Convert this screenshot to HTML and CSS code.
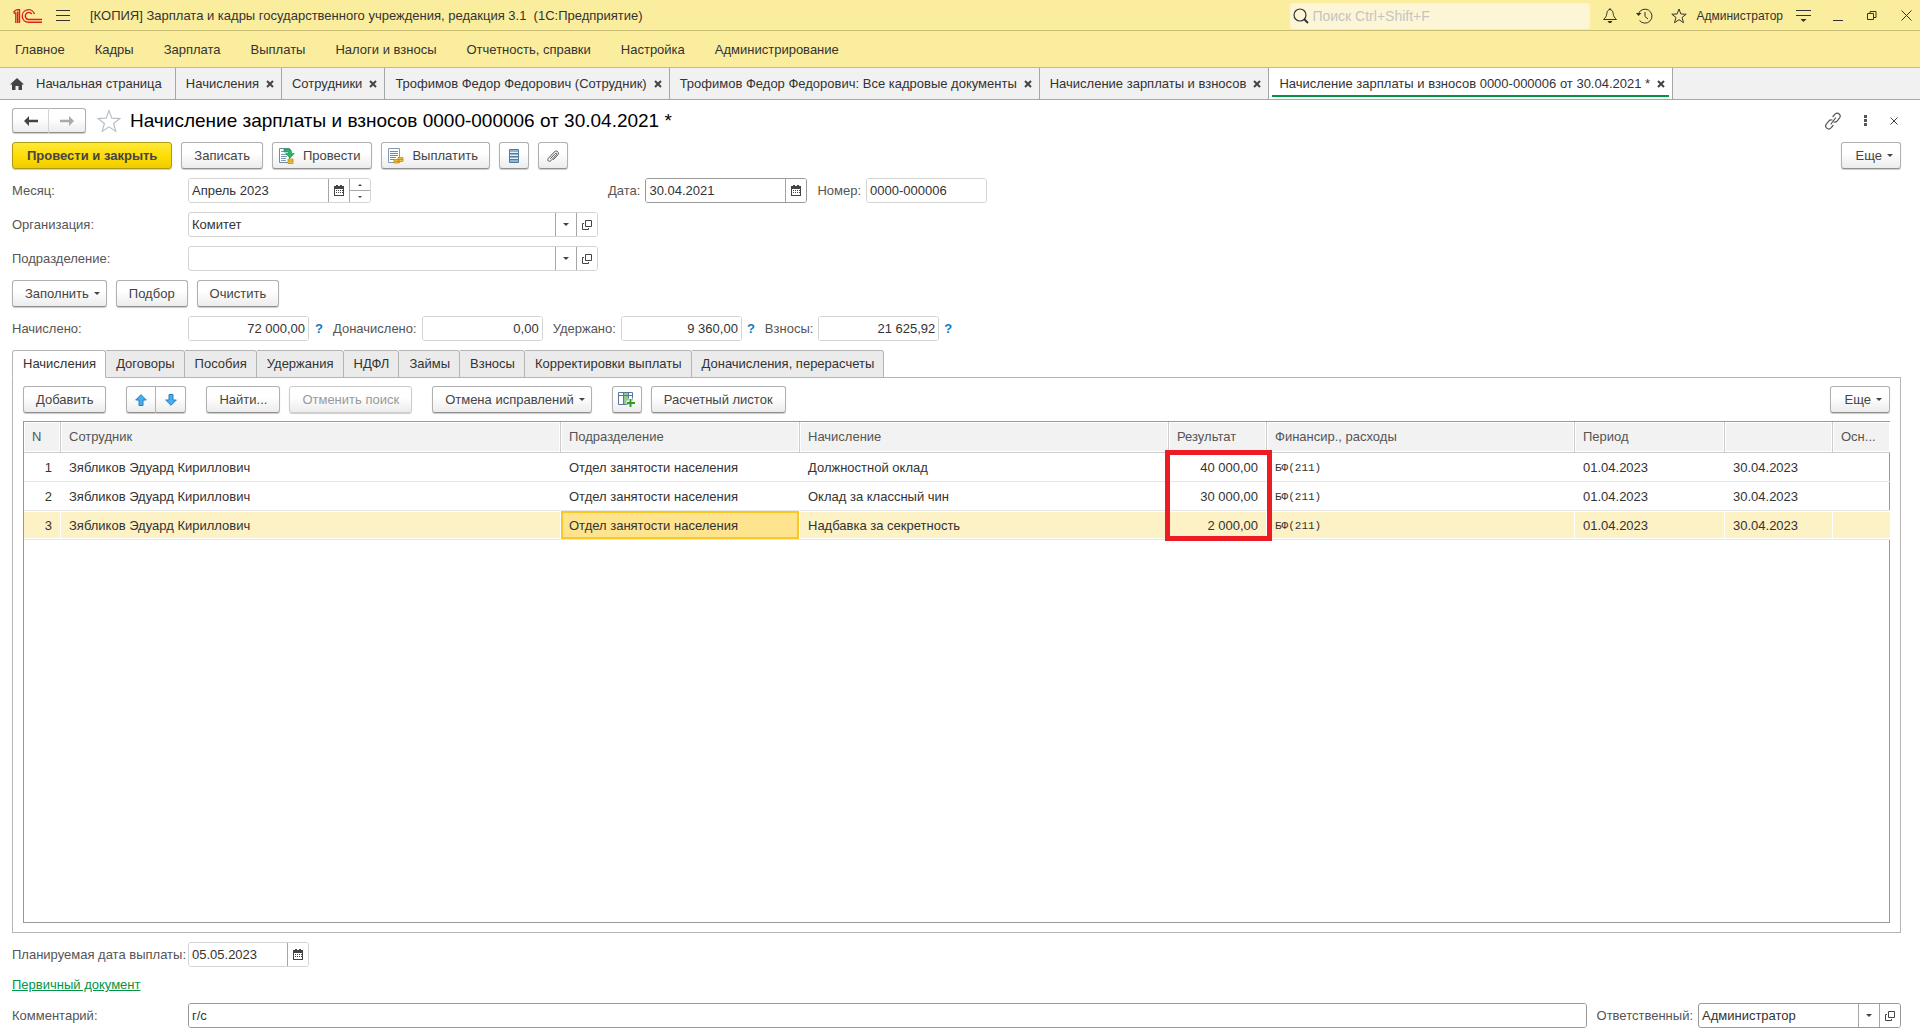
FILE: index.html
```html
<!DOCTYPE html>
<html lang="ru">
	<head>
		<meta charset="utf-8" />
		<meta name="viewport" content="width=device-width, initial-scale=1" />
		<title>Начисление зарплаты и взносов</title>
		<link rel="stylesheet" href="styles.css">
	</head>
	<body>
		<!-- shared icons -->
		<svg class="sprite" width="0" height="0">
			<symbol id="icoCalendar" viewBox="0 0 10 11">
				<path fill="#444" fill-rule="evenodd" d="M0 1h2V0h2v1h2V0h2v1h2v10H0zM1 4v6h8V4z" />
				<path stroke="#444" stroke-dasharray="1 1" d="M2 5.500h7M2 7.500h7" />
			</symbol>
			<symbol id="icoOpen" viewBox="0 0 10 10">
				<path fill="none" stroke="#444" d="M3.500.5h6v6h-6zM2 3.500H.5v6h6V8" />
			</symbol>
			<symbol id="icoClose" viewBox="0 0 8 8">
				<path stroke="#444" stroke-width="2" d="M1 1l6 6M7 1l-6 6" />
			</symbol>
			<symbol id="icoStar" viewBox="0 0 22 22">
				<path fill="none" stroke="currentColor" d="M11 1.500l2.600 6.900 7.400.3-5.800 4.600 2 7.200-6.200-4.100-6.200 4.100 2-7.200L1 8.700l7.400-.3z" />
			</symbol>
		</svg>

		<header class="titlebar">
			<svg class="logo" width="30" height="16" viewBox="0 0 30 16">
				<g fill="none" stroke="#d9231d" stroke-width="1.400">
					<path d="M.5 4L3.500 1.700M.5 5h2.300v10M3.500 1.700h3V15M4.700 3.500V15" />
					<path d="M21.500 6A6.300 6.300 0 1 0 15.500 14.300H29" />
					<path d="M18.800 6.200A3.500 3.500 0 1 0 15.500 11.500H29" />
				</g>
			</svg>
			<button class="icon-btn" aria-label="Меню">
				<svg width="14" height="13" viewBox="0 0 14 13"><path stroke="#333" d="M0 1.500h14M0 6.500h14M0 11.500h14" /></svg>
			</button>
			<h1 class="app-name">[КОПИЯ] Зарплата и кадры государственного учреждения, редакция 3.1&nbsp; (1С:Предприятие)</h1>
			<label class="search">
				<svg width="16" height="16" viewBox="0 0 16 16"><circle cx="7" cy="7" r="6" fill="none" stroke="#333" stroke-width="1.200" /><path stroke="#333" stroke-width="2" d="M11 11l4 4" /></svg>
				<input type="search" placeholder="Поиск Ctrl+Shift+F" aria-label="Поиск" />
			</label>
			<div class="sys">
				<button class="icon-btn" aria-label="Уведомления">
					<svg width="16" height="17" viewBox="0 0 16 17"><path fill="none" stroke="#333" d="M1.500 12.500h13c-2-2-3-3-3.300-6C11 4 9.500 2.500 8 2.500S5 4 4.800 6.500c-.3 3-1.300 4-3.300 6zM8 2.500V1" /><path fill="#333" d="M5.500 14h5L9 16H7z" /></svg>
				</button>
				<button class="icon-btn" aria-label="История">
					<svg width="17" height="16" viewBox="0 0 17 16"><path fill="none" stroke="#333" d="M2.500 5.500A7 7 0 1 1 3.500 12.500M9 4v4.500l3 2.500" /><path fill="#333" d="M0 5h5.500L2.500 8z" /></svg>
				</button>
				<button class="icon-btn" aria-label="Избранное">
					<svg width="16" height="16" viewBox="0 0 16 16"><path fill="none" stroke="#333" d="M8 1l1.900 5 5.300.2-4.200 3.300 1.500 5.200L8 11.700l-4.500 3L5 9.500.8 6.200 6.100 6z" /></svg>
				</button>
				<span class="user">Администратор</span>
				<button class="icon-btn" aria-label="Настройки">
					<svg width="15" height="15" viewBox="0 0 15 15"><path stroke="#333" d="M0 2.500h15M0 7.500h15" /><path fill="#333" d="M4.500 11h6l-3 3z" /></svg>
				</button>
			</div>
			<div class="win">
				<button class="icon-btn" aria-label="Свернуть"><svg width="10" height="10" viewBox="0 0 10 10"><path stroke="#333" d="M0 9.500h10" /></svg></button>
				<button class="icon-btn" aria-label="Развернуть"><svg width="10" height="10" viewBox="0 0 10 10"><path fill="none" stroke="#333" d="M.5 2.500h6v6h-6zM3 2V.5h6v6H7" /></svg></button>
				<button class="icon-btn" aria-label="Закрыть"><svg width="11" height="11" viewBox="0 0 11 11"><path stroke="#333" d="M.5.5l10 10M10.500.5l-10 10" /></svg></button>
			</div>
		</header>

		<nav class="menu">
			<a href="#">Главное</a>
			<a href="#">Кадры</a>
			<a href="#">Зарплата</a>
			<a href="#">Выплаты</a>
			<a href="#">Налоги и взносы</a>
			<a href="#">Отчетность, справки</a>
			<a href="#">Настройка</a>
			<a href="#">Администрирование</a>
		</nav>

		<nav class="windows">
			<a class="home" href="#">
				<svg width="14" height="12" viewBox="0 0 14 12"><path fill="#444" d="M7 0l7 6.500h-2V12H8.500V8h-3v4H2V6.500H0z" /></svg>
				Начальная страница
			</a>
			<a href="#">Начисления <svg width="8" height="8"><use href="#icoClose" /></svg></a>
			<a href="#">Сотрудники <svg width="8" height="8"><use href="#icoClose" /></svg></a>
			<a href="#">Трофимов Федор Федорович (Сотрудник) <svg width="8" height="8"><use href="#icoClose" /></svg></a>
			<a href="#">Трофимов Федор Федорович: Все кадровые документы <svg width="8" height="8"><use href="#icoClose" /></svg></a>
			<a href="#">Начисление зарплаты и взносов <svg width="8" height="8"><use href="#icoClose" /></svg></a>
			<a class="current" href="#">Начисление зарплаты и взносов 0000-000006 от 30.04.2021 * <svg width="8" height="8"><use href="#icoClose" /></svg></a>
		</nav>

		<main class="doc">
			<div class="row doc-head">
				<div class="pair nav-pair">
					<button class="btn" aria-label="Назад"><svg width="14" height="10" viewBox="0 0 14 10"><path fill="#444" d="M0 5l5-5v3.700h9v2.600H5V10z" /></svg></button>
					<button class="btn" aria-label="Вперед"><svg width="14" height="10" viewBox="0 0 14 10"><path fill="#aaa" d="M14 5L9 0v3.700H0v2.600h9V10z" /></svg></button>
				</div>
				<button class="icon-btn fav" aria-label="В избранное"><svg width="24" height="24"><use href="#icoStar" /></svg></button>
				<h2>Начисление зарплаты и взносов 0000-000006 от 30.04.2021 *</h2>
				<div class="doc-tools">
					<button class="icon-btn" aria-label="Получить ссылку">
						<svg width="16" height="18" viewBox="0 0 16 18"><path fill="none" stroke="#555" stroke-width="1.200" stroke-linecap="round" d="M6 12l4.500-6M8 4.500l2.200-2.600a3 3 0 0 1 4.400 4L12 9.200c-.8 1-2 1.200-3 .8M8 13.500l-2 2.400a3 3 0 0 1-4.500-4L4 8.800c.8-1 2-1.200 3-.8" /></svg>
					</button>
					<button class="icon-btn" aria-label="Еще действия"><svg width="3" height="11" viewBox="0 0 3 11"><path fill="#555" d="M0 0h3v3H0zM0 4h3v3H0zM0 8h3v3H0z" /></svg></button>
					<button class="icon-btn" aria-label="Закрыть документ"><svg width="8" height="8" viewBox="0 0 8 8"><path stroke="#444" d="M.5.5l7 7M7.500.5l-7 7" /></svg></button>
				</div>
			</div>

			<div class="row toolbar">
				<button class="btn primary">Провести и закрыть</button>
				<button class="btn">Записать</button>
				<button class="btn with-icon">
					<svg width="16" height="16" viewBox="0 0 16 16"><path fill="#fff" stroke="#6f8ba3" d="M.5.5h10v14H.5z" /><path stroke="#7d9bb5" d="M2 3.500h3M2 6.500h6M2 8.500h6M2 10.500h5M2 12.500h5" /><path fill="#24b864" stroke="#128a45" stroke-width=".6" d="M5 1h4.500q3 0 3 3v1.500h2.800L11 10 6.700 5.500h2.800V4H5z" /><path fill="#f5c542" stroke="#c08a14" stroke-width=".8" d="M9 11h5v4.500H9zM9 13h5" /></svg>
					Провести
				</button>
				<button class="btn with-icon">
					<svg width="16" height="16" viewBox="0 0 16 16"><path fill="#fff" stroke="#7d9bb5" d="M.5.5h11v14H.5z" /><path stroke="#6f8ba3" d="M2 3.500h8M2 5.500h8M2 7.500h8M2 9.500h6M2 11.500h4" /><path fill="#f5c542" stroke="#c08a14" stroke-width=".8" d="M6 11.500h5V15H6zM10 9.500h5v4h-5zM10 11.500h5M6 13.300h5" /></svg>
					Выплатить
				</button>
				<button class="btn square" aria-label="Движения">
					<svg width="10" height="14" viewBox="0 0 10 14"><path fill="#8fb3d1" stroke="#4f7c9f" d="M.5.5h9v13h-9z" /><path stroke="#e6f0f8" d="M1 3.500h8M1 6.500h8M1 9.500h8" /><path stroke="#4f7c9f" d="M1 4.500h8M1 7.500h8M1 10.500h8" /></svg>
				</button>
				<button class="btn square" aria-label="Файлы">
					<svg width="14" height="14" viewBox="0 0 14 14"><path fill="none" stroke="#555" stroke-linecap="round" d="M4.500 9.500l4.700-5c1-1 2.200.2 1.300 1.200l-5.600 6c-1.800 1.800-4.300-.5-2.600-2.300l6-6.500c2.300-2.400 5.600.8 3.400 3.200L7.500 10.500" /></svg>
				</button>
				<button class="btn drop more">Еще</button>
			</div>

			<div class="row">
				<div class="field month">
					<label for="inpMonth">Месяц:</label>
					<div class="box">
						<input type="text" id="inpMonth" value="Апрель 2023" />
						<button class="pick" aria-label="Календарь"><svg width="10" height="11"><use href="#icoCalendar" /></svg></button>
						<div class="spin">
							<button aria-label="Больше"><svg width="4" height="2" viewBox="0 0 4 2"><path fill="#444" d="M0 2l2-2 2 2z" /></svg></button>
							<button aria-label="Меньше"><svg width="4" height="2" viewBox="0 0 4 2"><path fill="#444" d="M0 0l2 2 2-2z" /></svg></button>
						</div>
					</div>
				</div>
				<div class="field date">
					<label for="inpDate">Дата:</label>
					<div class="box strong">
						<input type="text" id="inpDate" value="30.04.2021" />
						<button class="pick" aria-label="Календарь"><svg width="10" height="11"><use href="#icoCalendar" /></svg></button>
					</div>
				</div>
				<div class="field number">
					<label for="inpNumber">Номер:</label>
					<div class="box"><input type="text" id="inpNumber" value="0000-000006" /></div>
				</div>
			</div>

			<div class="row field wide">
				<label for="selOrg">Организация:</label>
				<div class="box">
					<select id="selOrg"><option>Комитет</option></select>
					<button class="pick" aria-label="Открыть"><svg width="10" height="10"><use href="#icoOpen" /></svg></button>
				</div>
			</div>

			<div class="row field wide">
				<label for="selDept">Подразделение:</label>
				<div class="box">
					<select id="selDept"><option></option></select>
					<button class="pick" aria-label="Открыть"><svg width="10" height="10"><use href="#icoOpen" /></svg></button>
				</div>
			</div>

			<div class="row toolbar">
				<button class="btn drop">Заполнить</button>
				<button class="btn">Подбор</button>
				<button class="btn">Очистить</button>
			</div>

			<div class="row totals">
				<div class="field first">
					<label for="inpAccrued">Начислено:</label>
					<div class="box"><input type="text" id="inpAccrued" value="72 000,00" /></div>
					<a class="help" href="#">?</a>
				</div>
				<div class="field">
					<label for="inpExtra">Доначислено:</label>
					<div class="box"><input type="text" id="inpExtra" value="0,00" /></div>
				</div>
				<div class="field">
					<label for="inpWithheld">Удержано:</label>
					<div class="box"><input type="text" id="inpWithheld" value="9 360,00" /></div>
					<a class="help" href="#">?</a>
				</div>
				<div class="field">
					<label for="inpContrib">Взносы:</label>
					<div class="box"><input type="text" id="inpContrib" value="21 625,92" /></div>
					<a class="help" href="#">?</a>
				</div>
			</div>

			<section class="pages">
				<div class="tabs" role="tablist">
					<button class="active" role="tab">Начисления</button>
					<button role="tab">Договоры</button>
					<button role="tab">Пособия</button>
					<button role="tab">Удержания</button>
					<button role="tab">НДФЛ</button>
					<button role="tab">Займы</button>
					<button role="tab">Взносы</button>
					<button role="tab">Корректировки выплаты</button>
					<button role="tab">Доначисления, перерасчеты</button>
				</div>
				<div class="page">
					<div class="toolbar spaced">
						<button class="btn">Добавить</button>
						<div class="pair">
							<button class="btn" aria-label="Вверх"><svg width="12" height="12" viewBox="0 0 12 12"><path fill="#45b0f0" stroke="#2b7fb5" d="M6 .7l5.300 5.300H8v5.500H4V6H.7z" /></svg></button>
							<button class="btn" aria-label="Вниз"><svg width="12" height="12" viewBox="0 0 12 12"><path fill="#45b0f0" stroke="#2b7fb5" d="M6 11.300L.7 6H4V.5h4V6h3.300z" /></svg></button>
						</div>
						<div class="toolbar">
							<button class="btn">Найти...</button>
							<button class="btn" disabled>Отменить поиск</button>
						</div>
						<button class="btn drop">Отмена исправлений</button>
						<div class="toolbar">
							<button class="btn square" aria-label="Добавить колонку">
								<svg width="17" height="15" viewBox="0 0 17 15"><path fill="#fff" stroke="#52799b" d="M.5.5h14v12H.5z" /><path fill="#8fc98b" d="M5 1h5v11H5z" /><path fill="none" stroke="#52799b" d="M0 3.500h15M5.500 0v12M10.500 0v12" /><path stroke="#fff" stroke-width="4" d="M12.500 6v9M8.500 10.500H17" /><path stroke="#2f9e1d" stroke-width="2" d="M12.500 7v8M9 11h8" /></svg>
							</button>
							<button class="btn">Расчетный листок</button>
						</div>
						<button class="btn drop more">Еще</button>
					</div>

					<div class="grid">
						<table>
							<colgroup>
								<col class="c-num"><col class="c-emp"><col class="c-dept"><col class="c-kind"><col class="c-sum">
								<col class="c-fin"><col class="c-from"><col class="c-to"><col class="c-base">
							</colgroup>
							<thead>
								<tr><th>N</th><th>Сотрудник</th><th>Подразделение</th><th>Начисление</th><th>Результат</th><th>Финансир., расходы</th><th>Период</th><th></th><th>Осн...</th></tr>
							</thead>
							<tbody>
								<tr><td class="num">1</td><td>Зябликов Эдуард Кириллович</td><td>Отдел занятости населения</td><td>Должностной оклад</td><td class="num marked">40 000,00<span class="mark"></span></td><td class="code">БФ(211)</td><td>01.04.2023</td><td>30.04.2023</td><td></td></tr>
								<tr><td class="num">2</td><td>Зябликов Эдуард Кириллович</td><td>Отдел занятости населения</td><td>Оклад за классный чин</td><td class="num">30 000,00</td><td class="code">БФ(211)</td><td>01.04.2023</td><td>30.04.2023</td><td></td></tr>
								<tr class="selected"><td class="num">3</td><td>Зябликов Эдуард Кириллович</td><td class="cursor">Отдел занятости населения</td><td>Надбавка за секретность</td><td class="num">2 000,00</td><td class="code">БФ(211)</td><td>01.04.2023</td><td>30.04.2023</td><td></td></tr>
							</tbody>
						</table>
					</div>
				</div>
			</section>

			<div class="row field plan">
				<label for="inpPlan">Планируемая дата выплаты:</label>
				<div class="box">
					<input type="text" id="inpPlan" value="05.05.2023" />
					<button class="pick" aria-label="Календарь"><svg width="10" height="11"><use href="#icoCalendar" /></svg></button>
				</div>
			</div>
			<div class="row"><a class="link" href="#">Первичный документ</a></div>
			<div class="row last">
				<div class="field comment">
					<label for="inpComment">Комментарий:</label>
					<div class="box strong"><input type="text" id="inpComment" value="г/с" /></div>
				</div>
				<div class="field owner">
					<label for="selOwner">Ответственный:</label>
					<div class="box strong">
						<select id="selOwner"><option>Администратор</option></select>
						<button class="pick" aria-label="Открыть"><svg width="10" height="10"><use href="#icoOpen" /></svg></button>
					</div>
				</div>
			</div>
		</main>
	</body>
</html>
```
FILE: styles.css
```css
:root {
	--yellow: #fbed9e;
	--line: #a6a6a6;
	--field-line: #d4d4d4;
	--text: #333;
	--label: #555;
	--green: #009646;
}

* {
	box-sizing: border-box;
	margin: 0;
}
body {
	background: #fff;
	color: var(--text);
	display: flex;
	flex-direction: column;
	font: 13px/16px "Liberation Sans", Arial, sans-serif;
	height: 100vh;
}
button,
input,
select {
	color: inherit;
	font: inherit;
}
a {
	color: inherit;
	text-decoration: none;
}
svg {
	display: block;
	flex: none;
}
.sprite {
	position: absolute;
}
.icon-btn {
	background: none;
	border: none;
	padding: 0;
}

/* title bar */
.titlebar {
	align-items: center;
	background: var(--yellow);
	border-bottom: 1px solid #c9bd72;
	display: flex;
	height: 31px;
	padding: 1px 8px 0 13px;
}
.logo {
	margin-right: 13px;
}
.app-name {
	flex: 1;
	font-size: 13px;
	font-weight: normal;
	margin-left: 20px;
	white-space: nowrap;
}
.search {
	align-items: center;
	background: #fdf6d6;
	border-radius: 3px;
	display: flex;
	gap: 3px;
	height: 26px;
	padding: 0 3px;
	width: 300px;
}
.search input {
	background: none;
	border: none;
	flex: 1;
	font-size: 14px;
	outline: none;
	padding: 0;
}
.search input::placeholder {
	color: #c4c4c4;
}
.sys {
	align-items: center;
	display: flex;
	gap: 18px;
	margin-left: 12px;
}
.user {
	font-size: 12px;
	margin: 0 -5px 0 -9px;
}
.win {
	align-items: center;
	display: flex;
	gap: 24px;
	margin-left: 22px;
}

/* sections menu */
.menu {
	align-items: center;
	background: var(--yellow);
	border-bottom: 1px solid #c9bd72;
	display: flex;
	gap: 30px;
	height: 37px;
	padding: 1px 15px 0;
}

/* opened windows */
.windows {
	background: #f1f1f1;
	border-bottom: 1px solid var(--line);
	display: flex;
	height: 32px;
}
.windows a {
	align-items: center;
	border-right: 1px solid var(--line);
	display: flex;
	gap: 7px;
	padding: 0 7px 0 10px;
	white-space: nowrap;
}
.windows .home {
	gap: 12px;
	padding-right: 13px;
}
.windows .current {
	background: #fff linear-gradient(var(--green), var(--green)) no-repeat center bottom 2px / calc(100% - 6px) 2px;
}

/* document form */
.doc {
	display: flex;
	flex: 1;
	flex-direction: column;
	gap: 9px;
	min-height: 0;
	padding: 8px 19px 7px 12px;
}
.row {
	align-items: center;
	display: flex;
}
.doc-head {
	height: 25px;
}
h2 {
	color: #000;
	flex: 1;
	font-size: 19px;
	font-weight: normal;
	margin-left: 9px;
}
.fav {
	color: #b4bac2;
	margin-left: 11px;
}
.doc-tools {
	align-items: center;
	display: flex;
	gap: 23px;
	padding-right: 3px;
}

.toolbar {
	display: flex;
	gap: 9px;
}
.spaced {
	gap: 20px;
}
.btn {
	align-items: center;
	background: linear-gradient(#fff 40%, #ececec);
	border: 1px solid #b0b0b0;
	border-bottom-color: #8f8f8f;
	border-radius: 3px;
	box-shadow: 0 1px 1px #ccc;
	color: #444;
	display: flex;
	height: 27px;
	justify-content: center;
	padding: 0 12px;
	white-space: nowrap;
}
.btn.primary {
	background: linear-gradient(#ffe838, #fbdb00 60%, #eecb00);
	border-color: #b09a10;
	font-weight: bold;
	padding: 0 14px;
}
.btn.with-icon {
	gap: 8px;
	padding: 0 11px 0 6px;
}
.btn.square {
	padding: 0;
	width: 30px;
}
.btn:disabled {
	border-color: #ccc;
	color: #999;
}
.btn.drop {
	padding-right: 6px;
}
.btn.drop::after {
	border: 3px solid transparent;
	border-bottom: none;
	border-top-color: #444;
	content: "";
	margin-left: 5px;
}
.btn.more {
	margin-left: auto;
	padding: 0 7px 0 14px;
}
.pair {
	display: flex;
}
.pair .btn {
	padding: 0;
	width: 30px;
}
.pair .btn:first-child {
	border-radius: 3px 0 0 3px;
}
.pair .btn:last-child {
	border-left: none;
	border-radius: 0 3px 3px 0;
}
.nav-pair .btn {
	height: 25px;
	width: 37px;
}
.nav-pair .btn:first-child {
	border-right-color: #d4d4d4;
}

/* fields */
.field {
	align-items: center;
	display: flex;
}
.field label {
	color: var(--label);
	white-space: nowrap;
}
.month label,
.wide label,
.first label,
.plan label,
.comment label {
	width: 176px;
}
.box {
	border: 1px solid var(--field-line);
	border-radius: 3px;
	display: flex;
	height: 25px;
	overflow: hidden;
}
.box.strong {
	border-color: #999;
}
.box input,
.box select {
	background: #fff;
	border: none;
	flex: 1;
	min-width: 0;
	outline: none;
	padding: 0 3px;
}
.box select {
	appearance: none;
	background:
		url("data:image/svg+xml,%3Csvg xmlns='http://www.w3.org/2000/svg' width='6' height='3'%3E%3Cpath fill='%23444' d='M0 0h6L3 3z'/%3E%3C/svg%3E") no-repeat right 7px center,
		linear-gradient(var(--line), var(--line)) no-repeat right 20px top / 1px 100%;
}
.pick {
	align-items: center;
	background: #fff;
	border: none;
	border-left: 1px solid var(--line);
	display: flex;
	justify-content: center;
	padding: 0;
	width: 21px;
}
.spin {
	border-left: 1px solid var(--line);
	display: flex;
	flex-direction: column;
	width: 21px;
}
.spin button {
	align-items: center;
	background: #fff;
	border: none;
	display: flex;
	flex: 1;
	justify-content: center;
	padding: 0;
}
.spin button:first-child {
	border-bottom: 1px solid var(--line);
}
.month .box {
	width: 183px;
}
.date {
	gap: 5px;
	margin-left: 237px;
}
.date .box {
	width: 162px;
}
.number {
	gap: 5px;
	margin-left: 10px;
}
.number .box,
.totals .box,
.plan .box {
	width: 121px;
}
.wide .box {
	width: 410px;
}
.totals {
	gap: 10px;
}
.totals .field {
	gap: 5px;
}
.totals .first {
	gap: 0;
}
.totals input {
	text-align: right;
}
.help {
	color: #0b7cc4;
	font-weight: bold;
}
.first .help {
	margin-left: 6px;
}

/* pages */
.pages {
	display: flex;
	flex: 1;
	flex-direction: column;
	min-height: 0;
}
.tabs {
	display: flex;
	margin-bottom: -1px;
}
.tabs button {
	background: #ebebeb;
	border: 1px solid #b4b4b4;
	border-left: none;
	border-radius: 0 3px 0 0;
	height: 28px;
	padding: 0 9px 0 10px;
	position: relative;
	white-space: nowrap;
}
.tabs .active {
	background: #fff;
	border-bottom-color: #fff;
	border-left: 1px solid #b4b4b4;
	border-radius: 3px 3px 0 0;
}
.page {
	border: 1px solid #b4b4b4;
	display: flex;
	flex: 1;
	flex-direction: column;
	gap: 8px;
	min-height: 0;
	padding: 8px 10px 9px;
}
.grid {
	border: 1px solid #999;
	flex: 1;
}
table {
	border-collapse: separate;
	border-spacing: 0;
	table-layout: fixed;
	width: 100%;
}
th,
td {
	border-right: 1px solid transparent;
	padding: 0 8px;
	text-align: left;
	white-space: nowrap;
}
th {
	background: #f2f2f2;
	border-bottom: 1px solid #ccc;
	border-right-color: #ccc;
	box-shadow: inset 0 0 0 1px #fff;
	color: var(--label);
	font-weight: normal;
	height: 31px;
}
td {
	border-bottom: 1px solid #e6e6e6;
	height: 29px;
	padding-top: 1px;
}
th:last-child,
td:last-child {
	border-right: none;
}
.num {
	text-align: right;
}
.code {
	font-family: "Liberation Mono", "Courier New", monospace;
	font-size: 11px;
}
.selected td {
	background: #fdf1c6;
	border-right-color: #fff;
	box-shadow: inset 0 1px #fff, inset 0 -1px #fff;
}
.selected .cursor {
	background: #ffe48f;
	box-shadow: inset 0 0 0 2px #f9c823;
}
.c-num { width: 37px; }
.c-emp { width: 500px; }
.c-dept { width: 239px; }
.c-kind { width: 369px; }
.c-sum { width: 98px; }
.c-fin { width: 308px; }
.c-from { width: 150px; }
.c-to { width: 108px; }
.c-base { width: 57px; }

/* red frame over the result column */
.marked {
	position: relative;
}
.mark {
	border: 5px solid #ed1c24;
	height: 91px;
	left: -4px;
	position: absolute;
	top: -3px;
	width: 107px;
}

/* bottom of the form */
.link {
	color: var(--green);
	line-height: 18px;
	text-decoration: underline;
}
.comment {
	flex: 1;
}
.comment .box {
	flex: 1;
}
.owner {
	gap: 5px;
	margin-left: 10px;
}
.owner .box {
	width: 203px;
}
```
